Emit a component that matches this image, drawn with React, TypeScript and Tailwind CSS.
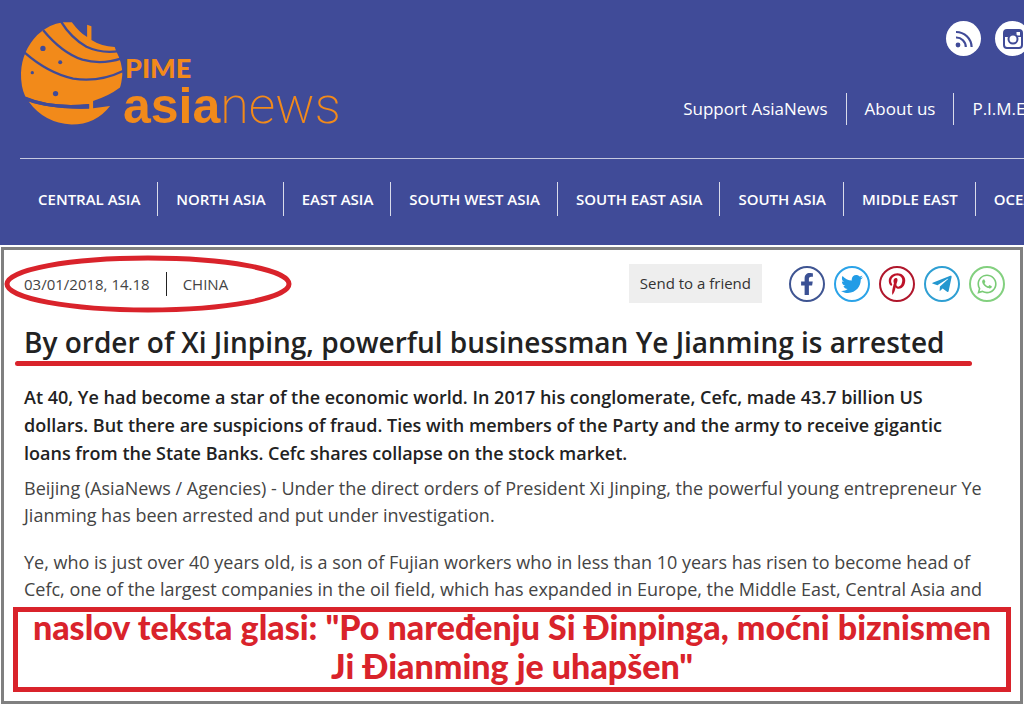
import {
  FaFacebookF,
  FaPinterestP,
  FaTelegramPlane,
  FaTwitter,
  FaWhatsapp,
} from "react-icons/fa";

const topLinks = ["Support AsiaNews", "About us", "P.I.M.E."];

const regions = [
  "CENTRAL ASIA",
  "NORTH ASIA",
  "EAST ASIA",
  "SOUTH WEST ASIA",
  "SOUTH EAST ASIA",
  "SOUTH ASIA",
  "MIDDLE EAST",
  "OCEANIA",
];

const shares = [
  { name: "Facebook", icon: FaFacebookF, color: "border-[#3f5592] text-[#3b5194]" },
  { name: "Twitter", icon: FaTwitter, color: "border-[#2ba3e8] text-[#229ce6]" },
  { name: "Pinterest", icon: FaPinterestP, color: "border-[#b0172c] text-[#bd1228]" },
  { name: "Telegram", icon: FaTelegramPlane, color: "border-[#2f9fd3] text-[#2497cf]" },
  { name: "WhatsApp", icon: FaWhatsapp, color: "border-[#83d07f] text-[#7acb76]" },
];

function Globe() {
  return (
    <svg viewBox="30 35 310 312" className="h-[104px] w-[103px] shrink-0" aria-hidden="true">
      <path
        fill="#f28a1a"
        d="M160 38 L186 38 Q208 68 232 83 L232 46 L245 50 L245 92 Q274 111 315 113 L319 124 Q338 160 338 195 Q336 220 331 235 Q295 262 250 275 L250 297 L301 290 Q258 346 185 346 Q103 342 56 277 Q120 301 238 298 L238 284 Q125 296 46 262 Q32 232 33 190 Q36 125 82 77 Q116 43 160 38 Z"
      />
      <g fill="none" stroke="#404b98" strokeWidth="7">
        <path d="M44 130 Q115 192 190 208 Q270 220 342 184" />
        <path d="M100 62 Q156 130 218 151 Q275 167 336 147" />
        <path d="M152 34 Q183 85 230 112 Q275 133 328 125" />
      </g>
      <path d="M40 261 Q125 296 238 284 L238 298 Q120 301 50 274 Z" fill="#404b98" />
      <g fill="#404b98">
        <circle cx="99" cy="117" r="8" />
        <circle cx="151" cy="159" r="6" />
        <circle cx="67" cy="190" r="5" />
        <circle cx="137" cy="253" r="8" />
      </g>
    </svg>
  );
}

function RssIcon() {
  return (
    <svg viewBox="0 0 18 18" className="h-[18px] w-[18px]" fill="none" stroke="#404b98" strokeWidth="2.2" aria-hidden="true">
      <circle cx="3" cy="15" r="2.4" fill="#404b98" stroke="none" />
      <path d="M1 7.5A9.5 9.5 0 0 1 10.8 17M1 2A15.5 15.5 0 0 1 16.6 17" />
    </svg>
  );
}

function InstagramIcon() {
  return (
    <svg viewBox="0 0 20 20" className="h-5 w-5" fill="none" aria-hidden="true">
      <rect x="1" y="1" width="18" height="18" rx="3" stroke="#404b98" strokeWidth="2" />
      <path d="M2 2h16v6h-3.4a5 5 0 0 0-9.2 0H2Z" fill="#404b98" />
      <rect x="13.5" y="3" width="3.5" height="3.5" fill="#fff" />
      <circle cx="10" cy="10" r="4.5" fill="#fff" stroke="#404b98" strokeWidth="2" />
    </svg>
  );
}

function Header() {
  return (
    <header className="overflow-hidden bg-[#404b98] pl-5 text-white">
      <div className="flex justify-between pt-[21px]">
        <a href="#" className="flex text-[#f28a1a]">
          <Globe />
          <span className="flex flex-col pt-8">
            <span className="pl-[2px] font-['Lato'] text-[27px] leading-[30px] font-black">PIME</span>
            <span className="text-[52px] leading-[40px] whitespace-nowrap">
              <span className="font-['Liberation_Sans'] text-[50px] font-bold">asia</span>
              <span className="font-['Roboto'] font-extralight">news</span>
            </span>
          </span>
        </a>

        <div className="-mr-[6px] flex shrink-0 flex-col items-end">
          <div className="flex gap-[14px]">
            <a href="#" aria-label="RSS" className="flex h-[35px] w-[35px] items-center justify-center rounded-full bg-white">
              <RssIcon />
            </a>
            <a href="#" aria-label="Instagram" className="flex h-[35px] w-[35px] items-center justify-center rounded-full bg-white">
              <InstagramIcon />
            </a>
          </div>
          <nav className="mt-[37px] flex">
            {topLinks.map((link) => (
              <a
                key={link}
                href="#"
                className="border-r border-white/80 px-[18px] text-[17px] leading-8 whitespace-nowrap last:border-0 last:pr-0"
              >
                {link}
              </a>
            ))}
          </nav>
        </div>
      </div>

      {/* Regions */}
      <nav className="mt-8 flex border-t border-white/70 pt-[23px] pb-[29px]">
        {regions.map((region) => (
          <a
            key={region}
            href="#"
            className="shrink-0 border-r border-white/80 pr-[17px] pl-[18px] text-[15px] leading-[34px] font-semibold whitespace-nowrap last:border-0"
          >
            {region}
          </a>
        ))}
      </nav>
    </header>
  );
}

export default function App() {
  return (
    <div className="overflow-hidden bg-white font-['Open_Sans',sans-serif] text-[#222]">
      <Header />

      <main className="mx-px mt-[2px] border-[3px] border-[#808080] pr-[15px] pb-[9px] pl-5">
        {/* Date and share buttons */}
        <div className="flex items-center justify-between pt-[14px]">
          <div className="relative flex items-center text-[15px] leading-6 text-[#444]">
            <time className="border-r border-[#222] pr-4">03/01/2018, 14.18</time>
            <span className="pl-4">CHINA</span>
            <svg
              viewBox="0 0 288 58"
              className="pointer-events-none absolute -top-[17px] -left-5 h-[58px] w-[288px]"
              fill="none"
              aria-hidden="true"
            >
              <ellipse cx="144" cy="29" rx="141" ry="26" stroke="#d9232b" strokeWidth="5" />
            </svg>
          </div>
          <div className="flex items-center gap-[9px]">
            <button className="mr-[18px] bg-[#eee] px-[11px] text-[15px] leading-[39px] text-[#333]">
              Send to a friend
            </button>
            {shares.map(({ name, icon: Icon, color }) => (
              <a
                key={name}
                href="#"
                aria-label={name}
                className={`flex h-9 w-9 items-center justify-center rounded-full border-2 ${color}`}
              >
                <Icon size={22} />
              </a>
            ))}
          </div>
        </div>

        <h1 className="mt-5 text-[28px] leading-[38px] font-semibold">
          By order of Xi Jinping, powerful businessman Ye Jianming is arrested
        </h1>
        <div className="mr-[33px] -ml-[9px] h-[5px] rounded-full bg-[#d9232b]" />

        <div className="mr-[19px] text-[18px] leading-[27px] text-[#444]">
          <p className="mt-[17px] leading-7 font-semibold text-[#222]">
            At 40, Ye had become a star of the economic world. In 2017 his conglomerate, Cefc, made 43.7 billion US
            dollars. But there are suspicions of fraud. Ties with members of the Party and the army to receive gigantic
            loans from the State Banks. Cefc shares collapse on the stock market.
          </p>
          <p className="mt-2">
            Beijing (AsiaNews / Agencies) - Under the direct orders of President Xi Jinping, the powerful young
            entrepreneur Ye Jianming has been arrested and put under investigation.
          </p>
          <p className="mt-5">
            Ye, who is just over 40 years old, is a son of Fujian workers who in less than 10 years has risen to
            become head of Cefc, one of the largest companies in the oil field, which has expanded in Europe, the
            Middle East, Central Asia and
          </p>
        </div>

        {/* Translated title */}
        <div className="mt-1 -mr-[6px] -ml-[11px] border-[5px] border-[#d9232b] px-2 pb-[2px]">
          <p className="-mt-[5px] text-center font-['Lato'] text-[34px] leading-[39px] font-black text-[#d9232b]">
            naslov teksta glasi: "Po naređenju Si Đinpinga, moćni biznismen Ji Đianming je uhapšen"
          </p>
        </div>
      </main>
    </div>
  );
}
